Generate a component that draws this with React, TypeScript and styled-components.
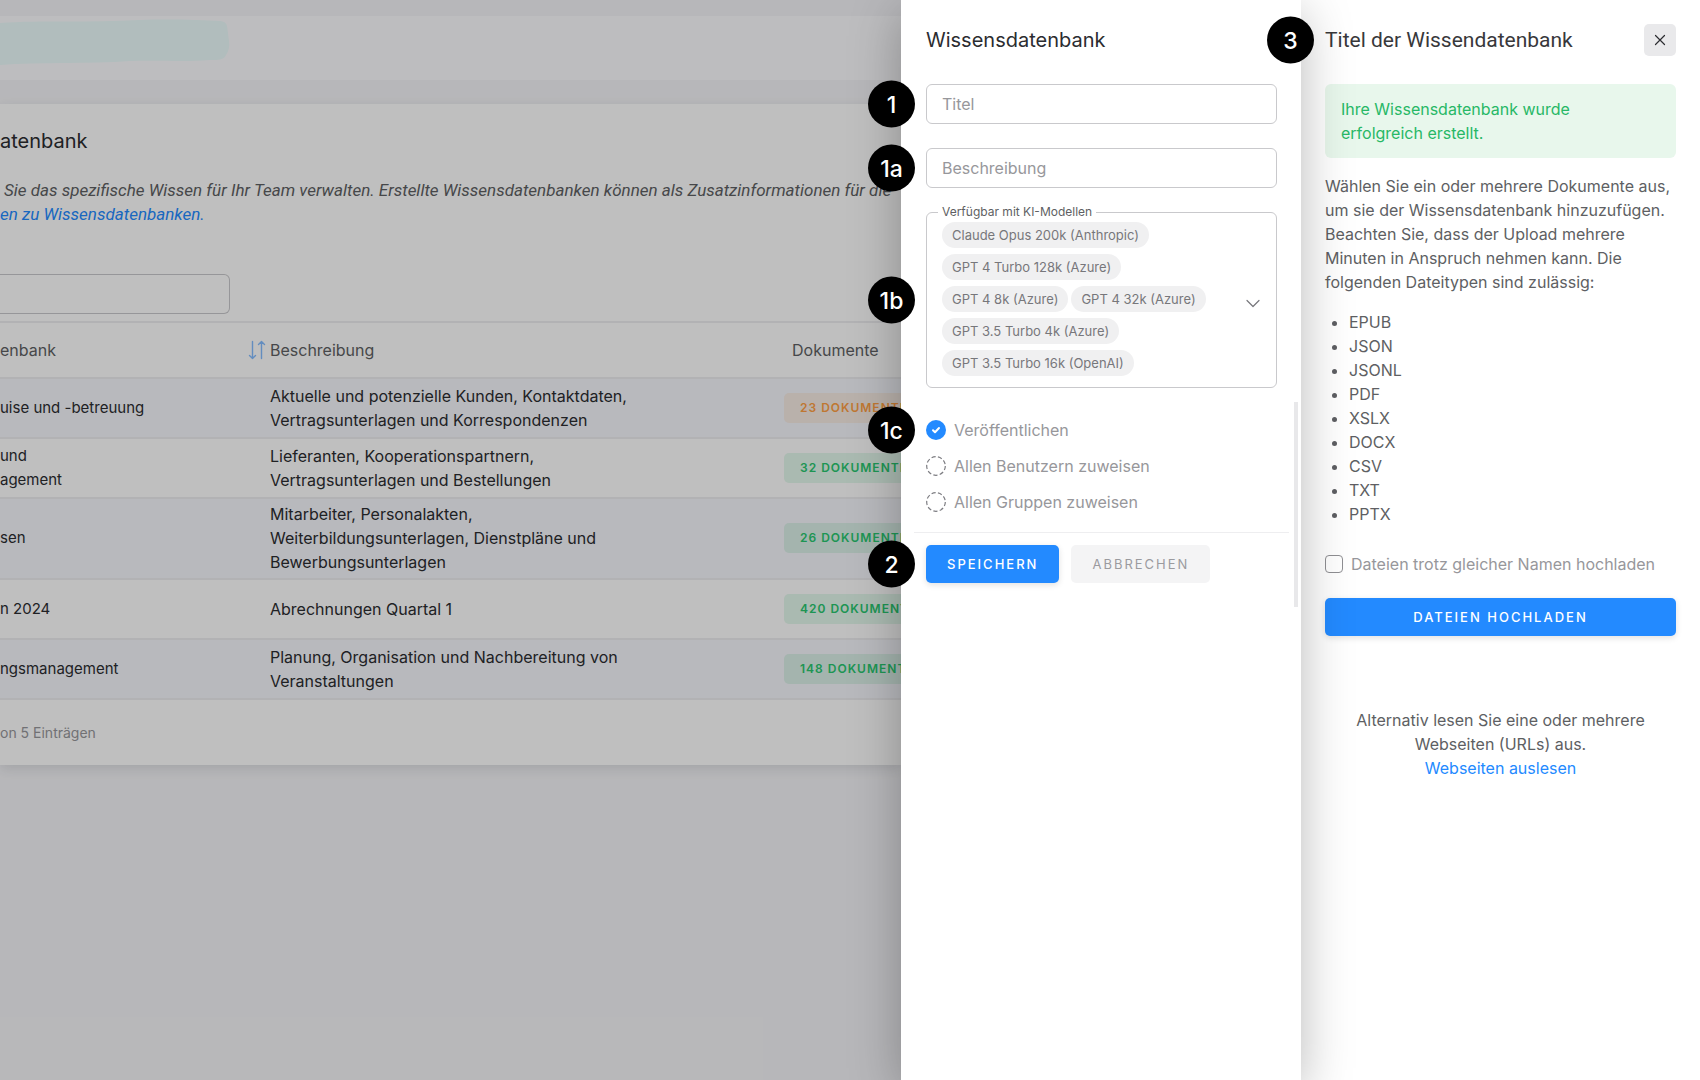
import React from "react";
import styled, { createGlobalStyle } from "styled-components";

const color = {
  primary: "#238aff",
  success: "#28c76f",
  warning: "#ff9f43",
  heading: "#2b2c30",
  text: "#5e5f63",
  muted: "#97979b",
  line: "#eeeef0",
  field: "#c9c9cc",
};

const GlobalStyle = createGlobalStyle`
  *, *::before, *::after { box-sizing: border-box; }
  body {
    margin: 0;
    background: #fff;
    color: ${color.text};
    font-family: Inter, "Liberation Sans", sans-serif;
    font-size: 16px;
    line-height: 24px;
  }
  h1, h2, p, ul { margin: 0; }
  button, input { font: inherit; }
`;

const Layout = styled.div`
  display: grid;
  grid-template-columns: minmax(0, 1fr) 400px 399px;
  min-height: 100vh;
`;

/* Page behind the drawers */

const Page = styled.main`
  position: relative;
  overflow: hidden;
  padding-top: 16px;
  background: #f5f5f8;

  &::after {
    content: "";
    position: absolute;
    inset: 0;
    background: rgba(0, 0, 0, 0.25);
    pointer-events: none;
  }
`;

const TopBar = styled.header`
  height: 64px;
  margin-bottom: 24px;
  background: #fdfdff;
`;

const Marker = styled.svg`
  display: block;
  width: 236px;
  height: 56px;
`;

const Card = styled.section`
  padding-top: 24px;
  background: #fff;
  box-shadow: 0 4px 12px rgba(34, 41, 47, 0.12);
`;

const PageTitle = styled.h1`
  margin-bottom: 24px;
  color: ${color.heading};
  font-size: 20px;
  font-weight: 400;
  line-height: 26px;
`;

const Intro = styled.p`
  margin-bottom: 48px;
  font-family: Roboto, sans-serif;
  font-size: 17px;
  font-style: italic;
  white-space: nowrap;
`;

const IntroLead = styled.span`
  padding-left: 4px;
`;

const TextLink = styled.a`
  color: ${color.primary};
  text-decoration: none;
`;

const SearchInput = styled.input`
  display: block;
  width: 230px;
  height: 40px;
  margin-bottom: 7px;
  padding: 0 16px;
  border: 1px solid ${color.field};
  border-left: 0;
  border-radius: 0 6px 6px 0;
  background: transparent;
`;

const Table = styled.table`
  width: calc(100% + 120px);
  table-layout: fixed;
  border-collapse: separate;
  border-spacing: 0;
  border-top: 2px solid ${color.line};
  font-size: 16px;
  text-align: left;
`;

const Col = styled.col<{ $width?: number }>`
  width: ${({ $width }) => ($width ? `${$width}px` : "auto")};
`;

const HeadCell = styled.th<{ $indent?: boolean }>`
  height: 56px;
  padding: 0 0 0 ${({ $indent }) => ($indent ? 8 : 0)}px;
  border-bottom: 2px solid ${color.line};
  font-weight: 400;
`;

const HeadContent = styled.span`
  display: flex;
  align-items: center;
  justify-content: space-between;
  padding-right: 4px;
`;

const SortButton = styled.button`
  display: flex;
  padding: 0;
  border: 0;
  background: none;
  color: #84bcff;
`;

const Row = styled.tr`
  &:nth-child(odd) {
    background: #f6f7fc;
  }
`;

const Cell = styled.td`
  height: 60px;
  padding: 3px 0 4px;
  border-bottom: 2px solid ${color.line};
  color: ${color.heading};
  white-space: pre-line;
`;

const NameCell = styled(Cell)`
  font-size: 15px;
`;

const CountChip = styled.span<{ $tone: "success" | "warning" }>`
  display: inline-block;
  padding: 0 16px;
  border-radius: 5px;
  background: ${({ $tone }) =>
    $tone === "success" ? "rgba(40, 199, 111, 0.13)" : "rgba(255, 159, 67, 0.12)"};
  color: ${({ $tone }) => color[$tone]};
  font-size: 12px;
  font-weight: 600;
  line-height: 30px;
  letter-spacing: 1px;
  text-transform: uppercase;
  white-space: nowrap;
`;

const TableInfo = styled.p`
  padding: 21px 0 20px;
  color: ${color.muted};
  font-size: 14px;
`;

/* Drawers */

const Drawer = styled.aside<{ $raised?: boolean }>`
  padding: 24px;
  background: #fff;
  ${({ $raised }) =>
    $raised &&
    `
    position: relative;
    z-index: 1;
    padding-left: 25px;
    box-shadow: 0 12px 48px rgba(0, 0, 0, 0.28);
  `}
`;

const DrawerHeader = styled.header`
  position: relative;
  display: flex;
  align-items: center;
  justify-content: space-between;
  height: 32px;
  margin-bottom: 28px;
`;

const DrawerTitle = styled.h2<{ $strong?: boolean }>`
  color: ${({ $strong }) => ($strong ? "#38383b" : color.heading)};
  font-family: ${({ $strong }) => ($strong ? "Roboto, sans-serif" : "inherit")};
  font-size: ${({ $strong }) => ($strong ? 21 : 20)}px;
  font-weight: 400;
`;

const CloseButton = styled.button`
  display: grid;
  place-items: center;
  width: 32px;
  height: 32px;
  padding: 0;
  border: 0;
  border-radius: 5px;
  background: #e9e9eb;
  color: #2b2c30;
`;

const Badge = styled.span`
  position: absolute;
  z-index: 3;
  top: 50%;
  left: -58px;
  display: grid;
  place-items: center;
  width: 47px;
  height: 47px;
  border-radius: 50%;
  background: #000;
  color: #fff;
  font-size: 23px;
  font-weight: 500;
  line-height: 24px;
  transform: translateY(-50%);
`;

const Field = styled.div`
  position: relative;
  margin-bottom: 24px;
`;

const TextInput = styled.input`
  display: block;
  width: 100%;
  height: 40px;
  padding: 0 15px;
  border: 1px solid ${color.field};
  border-radius: 6px;
  color: ${color.text};

  &::placeholder {
    color: ${color.muted};
    opacity: 1;
  }
`;

const ModelBox = styled.div`
  display: flex;
  align-items: center;
  justify-content: space-between;
  height: 176px;
  padding: 0 15px 2px;
  border: 1px solid ${color.field};
  border-radius: 6px;
`;

const ModelLabel = styled.span`
  position: absolute;
  top: -8px;
  left: 12px;
  padding: 0 4px;
  background: #fff;
  font-size: 12px;
  line-height: 16px;
`;

const ModelList = styled.ul`
  display: flex;
  flex-wrap: wrap;
  gap: 6px 3px;
  width: 280px;
  padding: 0;
  list-style: none;
`;

const ModelChip = styled.li`
  padding: 0 10px;
  border-radius: 13px;
  background: #f0f0f1;
  color: #77777b;
  font-size: 13px;
  line-height: 26px;
`;

const IconButton = styled.button`
  display: flex;
  padding: 8px 0 0;
  border: 0;
  background: none;
  color: #77777b;
`;

const Options = styled.div`
  display: grid;
  gap: 12px;
  margin: 30px 0 18px;
`;

const Option = styled.label`
  position: relative;
  display: flex;
  align-items: center;
  gap: 8px;
  color: ${color.muted};
`;

const RoundCheck = styled.input`
  appearance: none;
  width: 20px;
  height: 20px;
  margin: 0;
  border-radius: 50%;

  &:checked {
    background: ${color.primary};
  }

  & + svg circle {
    stroke: #7d7d82;
    stroke-dasharray: 4.2 2.300;
  }

  & + svg path,
  &:checked + svg circle {
    stroke: none;
  }

  &:checked + svg path {
    stroke: #fff;
  }
`;

const CheckArt = styled.svg`
  position: absolute;
  left: 0;
  top: 2px;
  pointer-events: none;
`;

const Divider = styled.hr`
  height: 1px;
  margin: 0 -12px 12px;
  border: 0;
  background: ${color.line};
`;

const Actions = styled.div`
  position: relative;
  display: flex;
  gap: 12px;
`;

const Button = styled.button<{ $quiet?: boolean; $wide?: boolean }>`
  width: ${({ $wide }) => ($wide ? "100%" : "auto")};
  height: 38px;
  padding: 0 21px;
  border: 0;
  border-radius: 5px;
  background: ${({ $quiet }) => ($quiet ? "#f4f4f5" : color.primary)};
  box-shadow: ${({ $quiet }) => ($quiet ? "none" : "0 2px 6px rgba(0, 0, 0, 0.12)")};
  color: ${({ $quiet }) => ($quiet ? "#9b9b9f" : "#fff")};
  font-size: 13px;
  font-weight: ${({ $quiet }) => ($quiet ? 400 : 500)};
  letter-spacing: 2px;
  text-transform: uppercase;
`;

const ScrollThumb = styled.span`
  position: absolute;
  top: 402px;
  right: 3px;
  width: 4px;
  height: 205px;
  background: #e8e8ea;
`;

const Alert = styled.p`
  margin-bottom: 16px;
  padding: 13px 48px 13px 16px;
  border-radius: 6px;
  background: #e8f7ec;
  color: #27b866;
`;

const TypeList = styled.ul`
  margin: 16px 0 26px;
  padding-left: 24px;
`;

const SquareCheck = styled.input`
  appearance: none;
  width: 18px;
  height: 18px;
  margin: 0;
  border: 1px solid #8f8f93;
  border-radius: 4px;
`;

const UploadOption = styled(Option)`
  margin-bottom: 22px;
`;

const Alternative = styled.p`
  margin-top: 72px;
  padding: 0 24px;
  text-align: center;
`;

const rows: { name: string; about: string; count: number; tone: "success" | "warning" }[] = [
  { name: "uise und -betreuung", about: "Aktuelle und potenzielle Kunden, Kontaktdaten,\nVertragsunterlagen und Korrespondenzen", count: 23, tone: "warning" },
  { name: "und\nagement", about: "Lieferanten, Kooperationspartnern,\nVertragsunterlagen und Bestellungen", count: 32, tone: "success" },
  { name: "sen", about: "Mitarbeiter, Personalakten,\nWeiterbildungsunterlagen, Dienstpläne und\nBewerbungsunterlagen", count: 26, tone: "success" },
  { name: "n 2024", about: "Abrechnungen Quartal 1", count: 420, tone: "success" },
  { name: "ngsmanagement", about: "Planung, Organisation und Nachbereitung von\nVeranstaltungen", count: 148, tone: "success" },
];

const models = [
  "Claude Opus 200k (Anthropic)",
  "GPT 4 Turbo 128k (Azure)",
  "GPT 4 8k (Azure)",
  "GPT 4 32k (Azure)",
  "GPT 3.5 Turbo 4k (Azure)",
  "GPT 3.5 Turbo 16k (OpenAI)",
];

const options = [
  { label: "Veröffentlichen", checked: true, badge: "1c" },
  { label: "Allen Benutzern zuweisen", checked: false },
  { label: "Allen Gruppen zuweisen", checked: false },
];

const fileTypes = ["EPUB", "JSON", "JSONL", "PDF", "XSLX", "DOCX", "CSV", "TXT", "PPTX"];

const SortIcon = () => (
  <svg width="18" height="20" viewBox="0 0 18 20" fill="none" stroke="currentColor" strokeWidth="1.4" strokeLinecap="round" strokeLinejoin="round">
    <path d="M4.5 1.5v17M1.5 15.5l3 3 3-3M13.5 18.5v-17M10.5 4.500l3-3 3 3" />
  </svg>
);

const ChevronIcon = () => (
  <svg width="16" height="16" viewBox="0 0 16 16" fill="none" stroke="currentColor" strokeWidth="1.2" strokeLinecap="round" strokeLinejoin="round">
    <path d="M2 5.500l6 6 6-6" />
  </svg>
);

const CloseIcon = () => (
  <svg width="12" height="12" viewBox="0 0 12 12" fill="none" stroke="currentColor" strokeWidth="1.2" strokeLinecap="round">
    <path d="M1.500 1.500l9 9M10.500 1.500l-9 9" />
  </svg>
);

const RoundCheckArt = () => (
  <CheckArt width="20" height="20" viewBox="0 0 20 20" fill="none" strokeLinecap="round" strokeLinejoin="round">
    <circle cx="10" cy="10" r="9.3" strokeWidth="1.2" strokeLinecap="butt" />
    <path d="M7 10.200l2 2 4-4.200" strokeWidth="2" />
  </CheckArt>
);

function KnowledgePage() {
  return (
    <Page>
      <TopBar>
        <Marker viewBox="0 0 236 56" aria-hidden="true">
          <path
            d="M0 7C40 4 90 7 140 4c30-1 60 0 80 1 8 1 7 5 8 12 1 10 3 14-2 22-2 5-8 5-16 5-24 2-50 0-80 1C90 48 40 46 0 49Z"
            fill="#ecfdfd"
          />
        </Marker>
      </TopBar>
      <Card>
        <PageTitle>atenbank</PageTitle>
        <Intro>
          <IntroLead>
            Sie das spezifische Wissen für Ihr Team verwalten. Erstellte Wissensdatenbanken können als Zusatzinformationen für die
          </IntroLead>
          <br />
          <TextLink href="#info">en zu Wissensdatenbanken.</TextLink>
        </Intro>
        <SearchInput type="search" aria-label="Suche" />
        <Table>
          <colgroup>
            <Col $width={270} />
            <Col $width={514} />
            <Col />
          </colgroup>
          <thead>
            <tr>
              <HeadCell scope="col">
                <HeadContent>
                  enbank
                  <SortButton type="button" aria-label="Sortieren">
                    <SortIcon />
                  </SortButton>
                </HeadContent>
              </HeadCell>
              <HeadCell scope="col">Beschreibung</HeadCell>
              <HeadCell scope="col" $indent>
                Dokumente
              </HeadCell>
            </tr>
          </thead>
          <tbody>
            {rows.map((row) => (
              <Row key={row.count}>
                <NameCell>{row.name}</NameCell>
                <Cell>{row.about}</Cell>
                <Cell>
                  <CountChip $tone={row.tone}>{row.count} Dokumente</CountChip>
                </Cell>
              </Row>
            ))}
          </tbody>
        </Table>
        <TableInfo>on 5 Einträgen</TableInfo>
      </Card>
    </Page>
  );
}

function CreateDrawer() {
  return (
    <Drawer $raised>
      <DrawerHeader>
        <DrawerTitle>Wissensdatenbank</DrawerTitle>
      </DrawerHeader>
      <Field>
        <Badge>1</Badge>
        <TextInput placeholder="Titel" aria-label="Titel" />
      </Field>
      <Field>
        <Badge>1a</Badge>
        <TextInput placeholder="Beschreibung" aria-label="Beschreibung" />
      </Field>
      <Field role="group" aria-labelledby="models-label">
        <Badge>1b</Badge>
        <ModelLabel id="models-label">Verfügbar mit KI-Modellen</ModelLabel>
        <ModelBox>
          <ModelList>
            {models.map((model) => (
              <ModelChip key={model}>{model}</ModelChip>
            ))}
          </ModelList>
          <IconButton type="button" aria-haspopup="listbox" aria-label="Modelle auswählen">
            <ChevronIcon />
          </IconButton>
        </ModelBox>
      </Field>
      <Options>
        {options.map(({ label, checked, badge }) => (
          <Option key={label}>
            {badge && <Badge>{badge}</Badge>}
            <RoundCheck type="checkbox" defaultChecked={checked} />
            <RoundCheckArt />
            {label}
          </Option>
        ))}
      </Options>
      <Divider />
      <Actions>
        <Badge>2</Badge>
        <Button type="button">Speichern</Button>
        <Button type="button" $quiet>
          Abbrechen
        </Button>
      </Actions>
      <ScrollThumb />
    </Drawer>
  );
}

function UploadDrawer() {
  return (
    <Drawer>
      <DrawerHeader>
        <Badge>3</Badge>
        <DrawerTitle $strong>Titel der Wissendatenbank</DrawerTitle>
        <CloseButton type="button" aria-label="Schließen">
          <CloseIcon />
        </CloseButton>
      </DrawerHeader>
      <Alert role="status">Ihre Wissensdatenbank wurde erfolgreich erstellt.</Alert>
      <p>
        Wählen Sie ein oder mehrere Dokumente aus, um sie der Wissensdatenbank hinzuzufügen. Beachten Sie, dass der
        Upload mehrere Minuten in Anspruch nehmen kann. Die folgenden Dateitypen sind zulässig:
      </p>
      <TypeList>
        {fileTypes.map((type) => (
          <li key={type}>{type}</li>
        ))}
      </TypeList>
      <UploadOption>
        <SquareCheck type="checkbox" />
        Dateien trotz gleicher Namen hochladen
      </UploadOption>
      <Button type="button" $wide>
        Dateien hochladen
      </Button>
      <Alternative>
        Alternativ lesen Sie eine oder mehrere Webseiten (URLs) aus.
        <br />
        <TextLink href="#webseiten">Webseiten auslesen</TextLink>
      </Alternative>
    </Drawer>
  );
}

export default function App() {
  return (
    <>
      <GlobalStyle />
      <Layout>
        <KnowledgePage />
        <CreateDrawer />
        <UploadDrawer />
      </Layout>
    </>
  );
}
